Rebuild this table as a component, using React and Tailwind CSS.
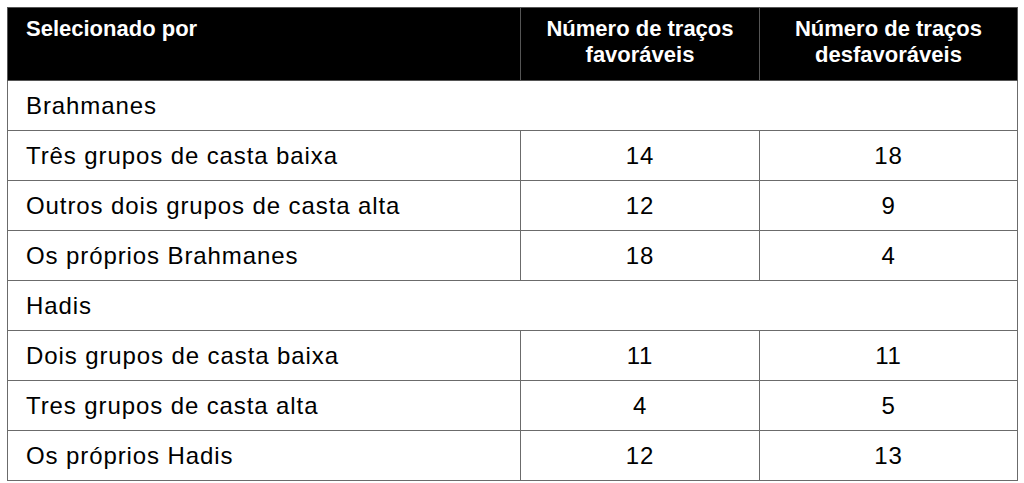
import React from 'react';

const rows = [
  { group: 'Brahmanes' },
  { label: 'Três grupos de casta baixa', fav: '14', desf: '18' },
  { label: 'Outros dois grupos de casta alta', fav: '12', desf: '9' },
  { label: 'Os próprios Brahmanes', fav: '18', desf: '4' },
  { group: 'Hadis' },
  { label: 'Dois grupos de casta baixa', fav: '11', desf: '11' },
  { label: 'Tres grupos de casta alta', fav: '4', desf: '5' },
  { label: 'Os próprios Hadis', fav: '12', desf: '13' },
];

export default function App() {
  return (
    <div className="w-[1024px] h-[483px] bg-white pl-[7px] pt-[7px] font-['Liberation_Sans',Arial,sans-serif] text-black">
      <table className="w-[1010px] table-fixed border-collapse">
        <colgroup>
          <col className="w-[513px]" />
          <col className="w-[239px]" />
          <col className="w-[258px]" />
        </colgroup>
        <thead>
          <tr className="h-[73px] bg-black text-white text-[22px] font-bold leading-[26px]">
            <th className="border border-[#555] px-[18px] pt-[8px] text-left align-top">
              Selecionado por
            </th>
            <th className="border border-[#555] px-2 pt-[8px] text-center align-top">
              Número de traços
              <br />
              favoráveis
            </th>
            <th className="border border-[#555] px-2 pt-[8px] text-center align-top">
              Número de traços
              <br />
              desfavoráveis
            </th>
          </tr>
        </thead>
        <tbody className="text-[24px] tracking-[0.9px]">
          {rows.map((r, i) =>
            r.group ? (
              <tr key={i} className="h-[50px]">
                <td colSpan={3} className="border border-[#6b6b6b] px-[18px]">
                  {r.group}
                </td>
              </tr>
            ) : (
              <tr key={i} className="h-[50px]">
                <td className="border border-[#6b6b6b] px-[18px]">{r.label}</td>
                <td className="border border-[#6b6b6b] text-center">{r.fav}</td>
                <td className="border border-[#6b6b6b] text-center">{r.desf}</td>
              </tr>
            )
          )}
        </tbody>
      </table>
    </div>
  );
}
